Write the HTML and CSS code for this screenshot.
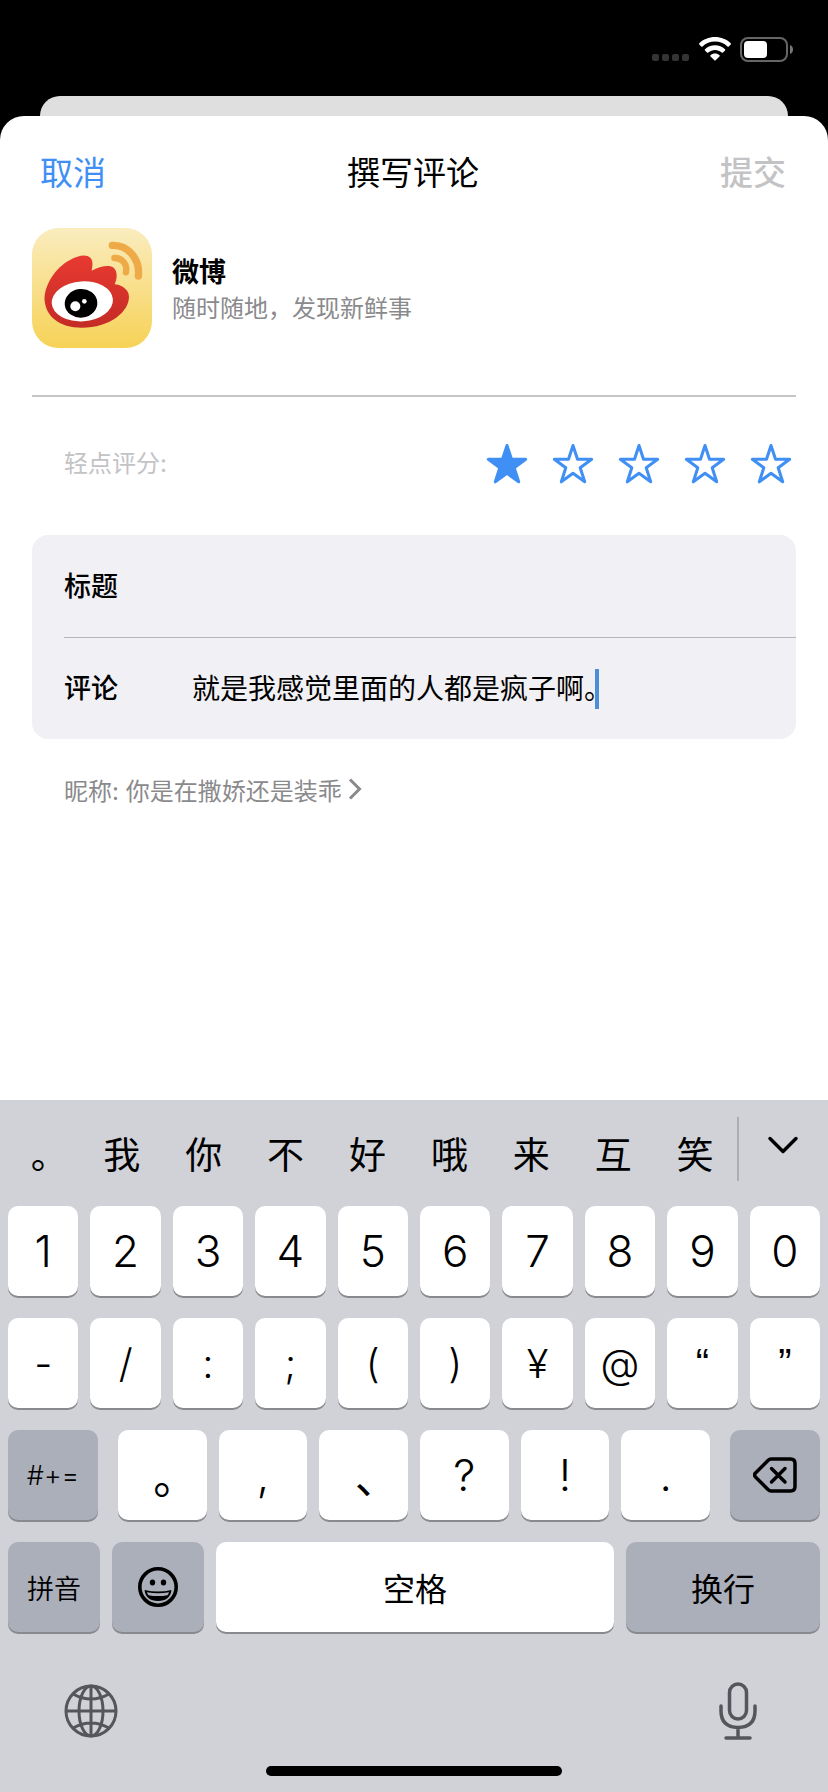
FILE: index.html
```html
<!DOCTYPE html>
<html lang="zh-CN">
<head>
  <meta charset="UTF-8" />
  <meta name="viewport" content="width=device-width, initial-scale=1.0" />
  <title>撰写评论</title>
  <link rel="stylesheet" href="styles.css">
</head>
<body>
  <div class="statusbar">
    <svg class="signal" width="38" height="8" viewBox="0 0 38 8" fill="#343434">
      <rect x="0" width="7" height="7" rx="2" /><rect x="10" width="7" height="7" rx="2" />
      <rect x="20" width="7" height="7" rx="2" /><rect x="30" width="7" height="7" rx="2" />
    </svg>
    <svg width="32" height="24" viewBox="0 0 32 24" fill="#fff">
      <path d="M16 0C9.900 0 4.300 2.300 0.300 6.200c-.4.400-.4.900 0 1.300l1.900 1.900c.4.400.9.400 1.300 0C6.800 6.300 11.200 4.600 16 4.600s9.200 1.700 12.500 4.800c.4.400.9.400 1.300 0l1.900-1.900c.4-.4.4-.9 0-1.300C27.700 2.300 22.100 0 16 0z" />
      <path d="M16 8.300c-3.900 0-7.400 1.500-10 3.900-.4.400-.4.900 0 1.300l2 2c.4.400.9.400 1.300 0 1.800-1.600 4.200-2.600 6.700-2.600s4.900 1 6.700 2.600c.4.400.9.400 1.300 0l2-2c.4-.4.400-.9 0-1.300-2.600-2.400-6.100-3.900-10-3.900z" />
      <path d="M16 16.600c-1.700 0-3.300.6-4.500 1.600-.4.300-.4.900 0 1.200l3.900 3.900c.4.400.8.400 1.200 0l3.900-3.900c.4-.3.4-.9 0-1.200-1.200-1-2.800-1.600-4.500-1.600z" />
    </svg>
    <svg width="54" height="26" viewBox="0 0 54 26">
      <rect x="1" y="1" width="46" height="23" rx="7" fill="none" stroke="#666" stroke-width="2" />
      <rect x="4" y="4" width="23" height="17" rx="4" fill="#fff" />
      <path d="M50 8c4 1.500 4 7.500 0 9z" fill="#777" />
    </svg>
  </div>
  <div class="back-card"></div>

  <main class="sheet">
    <header class="nav">
      <button class="cancel">取消</button>
      <h1>撰写评论</h1>
      <button class="submit" disabled>提交</button>
    </header>

    <section class="app">
      <svg class="app-icon" viewBox="36 39 360 360">
        <defs>
          <linearGradient id="gold" x1="0" y1="0" x2="0" y2="1">
            <stop offset="0" stop-color="#faecbf" />
            <stop offset="1" stop-color="#f6d256" />
          </linearGradient>
          <linearGradient id="flame" x1="0" y1="0" x2="0" y2="1">
            <stop offset="0" stop-color="#e83a31" />
            <stop offset="1" stop-color="#c42b25" />
          </linearGradient>
        </defs>
        <rect x="36" y="39" width="360" height="360" rx="80" fill="url(#gold)" />
        <path d="M74 258C70 215 105 158 150 135C175 121 198 117 211 128C220 137 218 152 215 167C238 155 268 147 281 158C293 168 292 190 284 208C302 209 327 222 327 245C327 290 270 338 185 338C117 338 79 304 74 258Z" fill="url(#flame)" />
        <ellipse cx="187" cy="259" rx="92" ry="60" transform="rotate(-4 187 259)" fill="#fff" />
        <ellipse cx="183" cy="265" rx="49" ry="43" transform="rotate(-6 183 265)" />
        <circle cx="166" cy="274" r="15" fill="#fff" />
        <circle cx="193" cy="259" r="7" fill="#fff" />
        <g fill="none" stroke="#eeaa46" stroke-linecap="round">
          <path d="M277 91C325 89 361 134 355 183" stroke-width="22" />
          <path d="M283 129C306 128 323 148 318 172" stroke-width="19" />
        </g>
      </svg>
      <div>
        <h2>微博</h2>
        <p>随时随地，发现新鲜事</p>
      </div>
    </section>

    <div class="rating" role="radiogroup" aria-labelledby="ratingHint">
      <span class="rating-hint" id="ratingHint">轻点评分:</span>
      <div class="stars">
        <label class="star"><input type="radio" name="stars" value="1" aria-label="1 星" checked><svg viewBox="0 0 42 42"><use href="#star" /></svg></label>
        <label class="star"><input type="radio" name="stars" value="2" aria-label="2 星"><svg viewBox="0 0 42 42"><use href="#star" /></svg></label>
        <label class="star"><input type="radio" name="stars" value="3" aria-label="3 星"><svg viewBox="0 0 42 42"><use href="#star" /></svg></label>
        <label class="star"><input type="radio" name="stars" value="4" aria-label="4 星"><svg viewBox="0 0 42 42"><use href="#star" /></svg></label>
        <label class="star"><input type="radio" name="stars" value="5" aria-label="5 星"><svg viewBox="0 0 42 42"><use href="#star" /></svg></label>
      </div>
    </div>

    <div class="form">
      <div class="field">
        <label for="title">标题</label>
        <input id="title" type="text">
      </div>
      <div class="field">
        <label for="review">评论</label>
        <input id="review" class="fit" type="text" value="就是我感觉里面的人都是疯子啊。">
        <span class="caret"></span>
      </div>
    </div>

    <a class="nickname" href="#">昵称: 你是在撒娇还是装乖
      <svg width="14" height="22" viewBox="0 0 14 22" fill="none" stroke="#8a8a8d" stroke-width="3"><path d="M2 1.500L11.500 11L2 20.500" /></svg>
    </a>
  </main>

  <div class="keyboard">
    <div class="candidates">
      <button>。</button><button>我</button><button>你</button><button>不</button><button>好</button><button>哦</button><button>来</button><button>互</button><button>笑</button>
      <button class="more" aria-label="展开">
        <svg width="32" height="18" viewBox="0 0 32 18" fill="none" stroke="#000" stroke-width="3.500" stroke-linecap="round" stroke-linejoin="round"><path d="M3 2.500L16 15.500L29 2.500" /></svg>
      </button>
    </div>

    <div class="row">
      <button class="key">1</button><button class="key">2</button><button class="key">3</button><button class="key">4</button><button class="key">5</button><button class="key">6</button><button class="key">7</button><button class="key">8</button><button class="key">9</button><button class="key">0</button>
    </div>
    <div class="row symbols">
      <button class="key">-</button><button class="key">/</button><button class="key">:</button><button class="key">;</button><button class="key">(</button><button class="key">)</button><button class="key">¥</button><button class="key">@</button><button class="key quote">“</button><button class="key quote">”</button>
    </div>
    <div class="row punctuation">
      <button class="key gray small">#+=</button>
      <div class="middle">
        <button class="key cjk">。</button><button class="key">,</button><button class="key cjk">、</button><button class="key">?</button><button class="key">!</button><button class="key">.</button>
      </div>
      <button class="key gray" aria-label="删除">
        <svg width="44" height="36" viewBox="0 0 44 36" fill="none" stroke="#000" stroke-width="3.500" stroke-linecap="round" stroke-linejoin="round">
          <path d="M18 2H37.500Q42 2 42 6.500V29.500Q42 34 37.500 34H18Q16.500 34 15 32.500L2.500 20Q0.500 18 2.500 16L15 3.500Q16.500 2 18 2Z" />
          <path d="M18.500 11.500L32 25M32 11.500L18.500 25" />
        </svg>
      </button>
    </div>
    <div class="row">
      <button class="key gray small">拼音</button>
      <button class="key gray" aria-label="表情">
        <svg width="40" height="40" viewBox="0 0 40 40">
          <circle cx="20" cy="20" r="18.200" fill="none" stroke="#000" stroke-width="3.600" />
          <ellipse cx="14.500" cy="15.500" rx="2.700" ry="3" /><ellipse cx="25.500" cy="15.500" rx="2.700" ry="3" />
          <path d="M6.500 23Q20 26 33.500 23Q32 34 20 34Q8 34 6.500 23Z" />
          <path d="M9 25.200Q20 27.500 31 25.200Q30.500 27 29.500 28.200Q20 30 10.500 28.200Q9.500 27 9 25.200Z" fill="#abafba" />
        </svg>
      </button>
      <button class="key wide">空格</button>
      <button class="key gray wide return">换行</button>
    </div>

    <div class="dock">
      <button aria-label="切换键盘">
        <svg width="54" height="54" viewBox="0 0 54 54" fill="none" stroke="#55565b" stroke-width="3">
          <circle cx="27" cy="27" r="25" />
          <ellipse cx="27" cy="27" rx="12" ry="25" />
          <path d="M27 2V52M2 27H52M9 10Q27 20 45 10M9 44Q27 34 45 44" />
        </svg>
      </button>
      <button aria-label="听写">
        <svg width="38" height="58" viewBox="0 0 38 58" fill="none" stroke="#55565b" stroke-width="3.500" stroke-linecap="round">
          <rect x="10.500" y="2" width="17" height="35" rx="8.500" />
          <path d="M2 24V29Q2 45 19 45.500Q36 45 36 29V24M19 46V56M7 56H31" />
        </svg>
      </button>
    </div>
    <div class="home-bar"></div>
  </div>

  <svg class="sprite">
    <symbol id="star" viewBox="0 0 42 42">
      <path d="M21 2.500L25.500 16.300H39.700L28.200 24.700L32.700 38.800L21 30.300L9.300 38.800L13.800 24.700L2.300 16.300H16.500Z" stroke-width="3" stroke-linejoin="round" />
    </symbol>
  </svg>
</body>
</html>
```
FILE: styles.css
```css
:root {
  --blue: #3f8ff5;
  --gray: #8a8a8d;
  --light: #c3c3c5;
  --line: #c6c6c8;
  --field: #f1f0f5;
  --keyboard: #d1d2d8;
  --key-gray: #abafba;
}

* {
  box-sizing: border-box;
}

body {
  margin: 0;
  min-height: 100vh;
  display: flex;
  flex-direction: column;
  background: #000;
  color: #000;
  font-family: Inter, "Noto Sans CJK SC", sans-serif;
}

h1, h2, p {
  margin: 0;
}

button, input {
  margin: 0;
  padding: 0;
  border: none;
  background: none;
  color: inherit;
  font: inherit;
}

svg {
  display: block;
  flex: none;
}

.sprite {
  position: absolute;
  width: 0;
  height: 0;
}

/* status bar */
.statusbar {
  height: 96px;
  padding: 37px 34px 0 0;
  display: flex;
  justify-content: flex-end;
  gap: 9px;
}

.signal {
  margin-top: 17px;
}

.back-card {
  height: 40px;
  margin: 0 40px -20px;
  border-radius: 20px 20px 0 0;
  background: #dfdfdf;
}

/* review sheet */
.sheet {
  flex: 1;
  position: relative;
  padding: 0 32px;
  background: #fff;
  border-radius: 24px 24px 0 0;
}

.nav {
  height: 112px;
  padding: 0 10px 2px 8px;
  display: grid;
  grid-template-columns: 1fr auto 1fr;
  align-items: center;
  font-size: 33px;
}

.nav h1 {
  font-size: 33px;
  font-weight: 400;
}

.cancel {
  justify-self: start;
  color: var(--blue);
}

.submit {
  justify-self: end;
  color: var(--light);
  font-weight: 500;
}

.app {
  height: 169px;
  display: flex;
  gap: 20px;
  border-bottom: 2px solid var(--line);
}

.app-icon {
  width: 120px;
  height: 120px;
}

.app h2 {
  margin-top: 27px;
  font-size: 27px;
  line-height: 36px;
  font-weight: 700;
}

.app p {
  font-size: 24px;
  line-height: 36px;
  color: var(--gray);
}

.rating {
  height: 138px;
  padding: 0 4px 4px 32px;
  display: flex;
  align-items: center;
  justify-content: space-between;
}

.rating-hint {
  padding-bottom: 6px;
  font-size: 24px;
  color: var(--light);
}

.stars {
  display: flex;
  gap: 24px;
}

.star {
  position: relative;
}

.star input {
  position: absolute;
  inset: 0;
  opacity: 0;
}

.star svg {
  width: 42px;
  height: 42px;
  fill: none;
  stroke: var(--blue);
}

.star input:checked + svg {
  fill: var(--blue);
}

.form {
  padding-left: 32px;
  border-radius: 16px;
  background: var(--field);
}

.field {
  height: 102px;
  display: flex;
  align-items: center;
  font-size: 28px;
}

.field + .field {
  border-top: 1px solid #b4b4ba;
}

.field label {
  width: 128px;
  padding-bottom: 4px;
  font-size: 27px;
  font-weight: 500;
}

.field input {
  flex: 1;
  min-width: 0;
  padding-bottom: 4px;
  outline: none;
}

.field input.fit {
  flex: none;
  max-width: 100%;
  field-sizing: content;
}

/* sits right behind the full stop, over its empty half */
.caret {
  width: 4px;
  height: 40px;
  margin-left: -17px;
  background: #4c8fd6;
}

.nickname {
  height: 100px;
  padding-left: 32px;
  display: inline-flex;
  align-items: center;
  gap: 6px;
  font-size: 24px;
  color: var(--gray);
  text-decoration: none;
}

/* keyboard */
.keyboard {
  padding: 0 8px 16px;
  background: var(--keyboard);
}

.candidates {
  height: 106px;
  margin: 0 -8px;
  display: grid;
  grid-template-columns: repeat(9, 1fr) 91px;
  align-items: center;
  font-size: 37px;
  font-feature-settings: "halt";
}

.candidates button {
  padding-right: 2px;
}

.candidates .more {
  height: 64px;
  display: flex;
  align-items: center;
  justify-content: center;
  margin-bottom: 8px;
  padding: 0 0 8px;
  border-left: 2px solid #acadb2;
}

.row {
  display: flex;
  gap: 12px;
  margin-bottom: 22px;
}

.key {
  flex: 1;
  min-width: 0;
  height: 90px;
  display: flex;
  align-items: center;
  justify-content: center;
  border-radius: 10px;
  background: #fff;
  box-shadow: 0 2px 0 #898a8e;
  font-size: 44px;
  font-weight: 360;
}

.key.gray {
  flex: none;
  width: 92px;
  background: var(--key-gray);
}

.key.small {
  font-size: 27px;
}

.key.wide {
  font-size: 32px;
  font-weight: 400;
}

.key.return {
  width: 194px;
}

.key.cjk {
  text-indent: 4px;
  font-weight: 400;
  font-feature-settings: "halt";
}

.symbols .key {
  font-size: 40px;
}

.symbols .quote {
  font-family: "Liberation Sans", sans-serif;
}

.punctuation {
  gap: 20px;
}

.punctuation .key.gray {
  width: 90px;
}

.middle {
  flex: 1;
  display: flex;
  gap: 12px;
}

.dock {
  height: 112px;
  padding: 2px 63px 0 56px;
  display: flex;
  align-items: center;
  justify-content: space-between;
}

.home-bar {
  width: 296px;
  height: 10px;
  margin: 0 auto;
  border-radius: 5px;
  background: #000;
}
```
